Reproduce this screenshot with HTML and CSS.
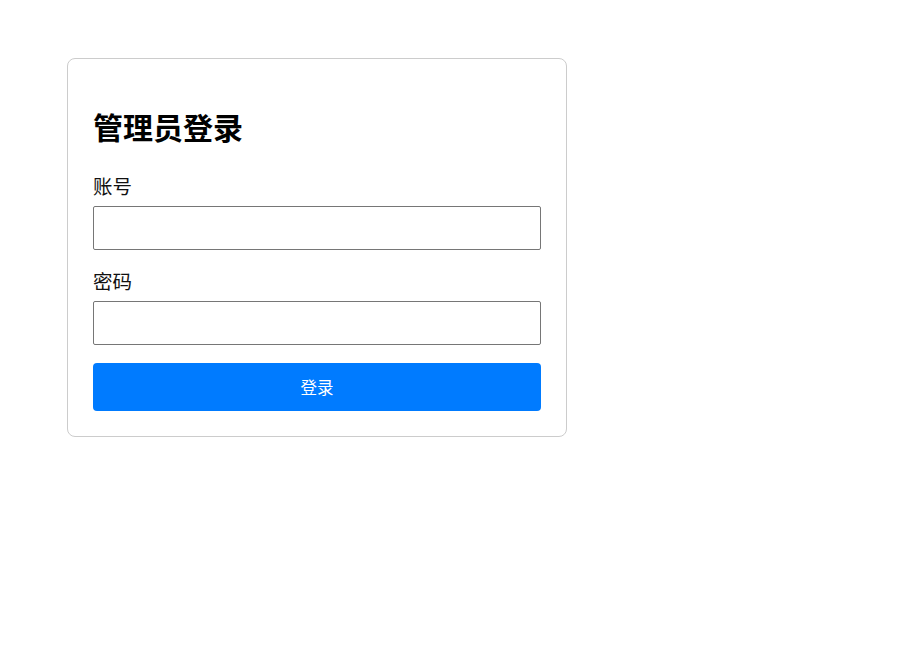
FILE: index.html
```html
<!DOCTYPE html>
<html lang="zh">
<head>
<meta charset="utf-8">
<title>管理员登录</title>
<link rel="stylesheet" href="styles.css">
</head>
<body>
<div class="page">
  <div class="card">
    <h2 class="title">管理员登录</h2>
    <div class="field">
      <label class="label" for="u">账号</label>
      <input class="input" id="u" type="text">
    </div>
    <div class="field">
      <label class="label" for="p">密码</label>
      <input class="input" id="p" type="password">
    </div>
    <button class="btn" type="button">登录</button>
  </div>
</div>
</body>
</html>
```
FILE: styles.css
```css
* { box-sizing: border-box; }
body {
  margin: 0;
  background: #fff;
  font-family: "Noto Sans CJK SC", "Noto Sans", sans-serif;
  color: #000;
}
.page {
  padding: 58px 0 0 67px;
}
.card {
  width: 500px;
  border: 1px solid #ccc;
  border-radius: 8px;
  padding: 25px;
}
.title {
  margin: 22px 0 26px;
  font-size: 30px;
  font-weight: 700;
  line-height: 40px;
}
.field {
  margin-bottom: 17px;
}
.label {
  display: block;
  font-size: 19.5px;
  line-height: 28px;
  margin-bottom: 6px;
  color: #111;
}
.input {
  display: block;
  width: 100%;
  height: 44px;
  border: 1px solid #767676;
  border-radius: 2px;
  padding: 8px;
  font-size: 16px;
}
.btn {
  display: block;
  width: 100%;
  height: 48px;
  margin-top: 18px;
  border: none;
  border-radius: 4px;
  background: #007bff;
  color: #fff;
  font-family: inherit;
  font-size: 16.5px;
}
```
